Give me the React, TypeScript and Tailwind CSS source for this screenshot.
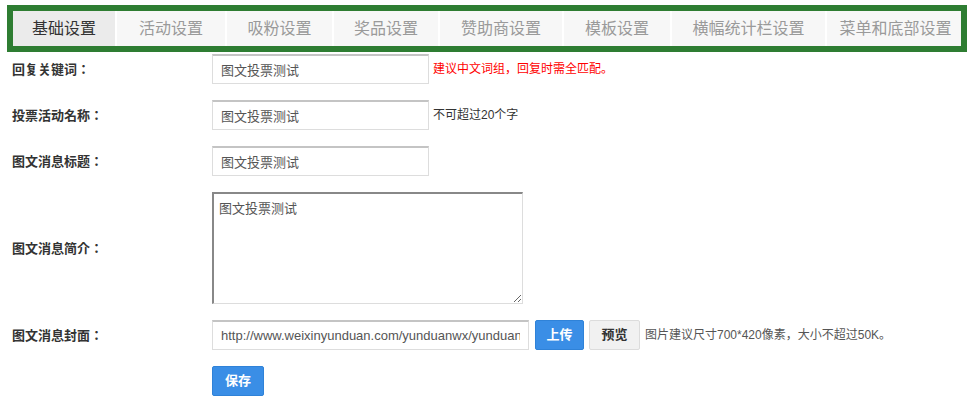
import React from 'react'

const tabs = [
  { name: '基础设置', w: 'w-[102px]' },
  { name: '活动设置', w: 'w-[108px]' },
  { name: '吸粉设置', w: 'w-[105px]' },
  { name: '奖品设置', w: 'w-[104px]' },
  { name: '赞助商设置', w: 'w-[122px]' },
  { name: '模板设置', w: 'w-[106px]' },
  { name: '横幅统计栏设置', w: 'w-[153px]' },
  { name: '菜单和底部设置', w: 'w-[137px]' },
]

const font = { fontFamily: '"Liberation Sans", "Noto Sans CJK SC", sans-serif' }
const labelFont = { fontFamily: '"Noto Sans CJK JP", sans-serif' }

function Label({ children }: { children: React.ReactNode }) {
  return (
    <div className="w-[212px] shrink-0 pl-[12px] text-[13px] font-bold text-[#333]" style={labelFont}>
      {children}
    </div>
  )
}

const inputCls =
  'h-[30px] border border-[#ddd] border-t-[#c4c4c4] border-t-2 px-[8px] text-[13px] text-[#555] outline-none bg-white'

export default function App() {
  return (
    <div className="bg-white w-[979px] h-[398px] overflow-hidden" style={font}>
      {/* 选项卡 */}
      <div className="ml-[7px] mt-[5px] w-[960px] border-[6px] border-[#2e7d32] bg-white overflow-hidden">
        <div className="flex gap-[2px] h-[35px] whitespace-nowrap">
          {tabs.map((t, i) => (
            <div
              key={t.name}
              className={`${t.w} shrink-0 flex items-center justify-center text-[16px] ${
                i === 0 ? 'bg-[#ebebeb] text-[#333]' : 'bg-[#f7f7f7] text-[#9a9a9a]'
              }`}
            >
              {t.name}
            </div>
          ))}
        </div>
      </div>

      {/* 表单 */}
      <div className="mt-[2px] flex flex-col gap-[16px]">
        <div className="flex items-center">
          <Label>回复关键词：</Label>
          <input className={`${inputCls} w-[217px]`} defaultValue="图文投票测试" />
          <span className="ml-[4px] text-[12px] text-[#ff0000]">建议中文词组，回复时需全匹配。</span>
        </div>
        <div className="flex items-center">
          <Label>投票活动名称：</Label>
          <input className={`${inputCls} w-[217px]`} defaultValue="图文投票测试" />
          <span className="ml-[4px] text-[12px] text-[#333]">不可超过20个字</span>
        </div>
        <div className="flex items-center">
          <Label>图文消息标题：</Label>
          <input className={`${inputCls} w-[217px]`} defaultValue="图文投票测试" />
        </div>
        <div className="flex items-center">
          <Label>图文消息简介：</Label>
          <textarea
            className="w-[311px] h-[112px] border border-[#ddd] border-t-2 border-l-2 border-t-[#888] border-l-[#888] px-[5px] py-[6px] text-[13px] text-[#555] outline-none leading-[18px]"
            defaultValue="图文投票测试"
          />
        </div>
        <div className="flex items-center">
          <Label>图文消息封面：</Label>
          <input
            className={`${inputCls} w-[317px]`}
            defaultValue="http://www.weixinyunduan.com/yunduanwx/yunduan"
          />
          <button className="ml-[6px] h-[30px] w-[49px] rounded-[2px] bg-[#3a8ee6] border border-[#2f82d8] text-white text-[13px] font-bold">
            上传
          </button>
          <button className="ml-[5px] h-[30px] w-[51px] rounded-[2px] bg-[#f1f1f1] border border-[#dcdcdc] text-[#333] text-[13px] font-bold">
            预览
          </button>
          <span className="ml-[5px] text-[12px] text-[#555]">图片建议尺寸700*420像素，大小不超过50K。</span>
        </div>
        <div className="flex">
          <div className="w-[212px] shrink-0" />
          <button className="h-[30px] w-[52px] rounded-[2px] bg-[#3a8ee6] border border-[#2f82d8] text-white text-[13px] font-bold">
            保存
          </button>
        </div>
      </div>
    </div>
  )
}
